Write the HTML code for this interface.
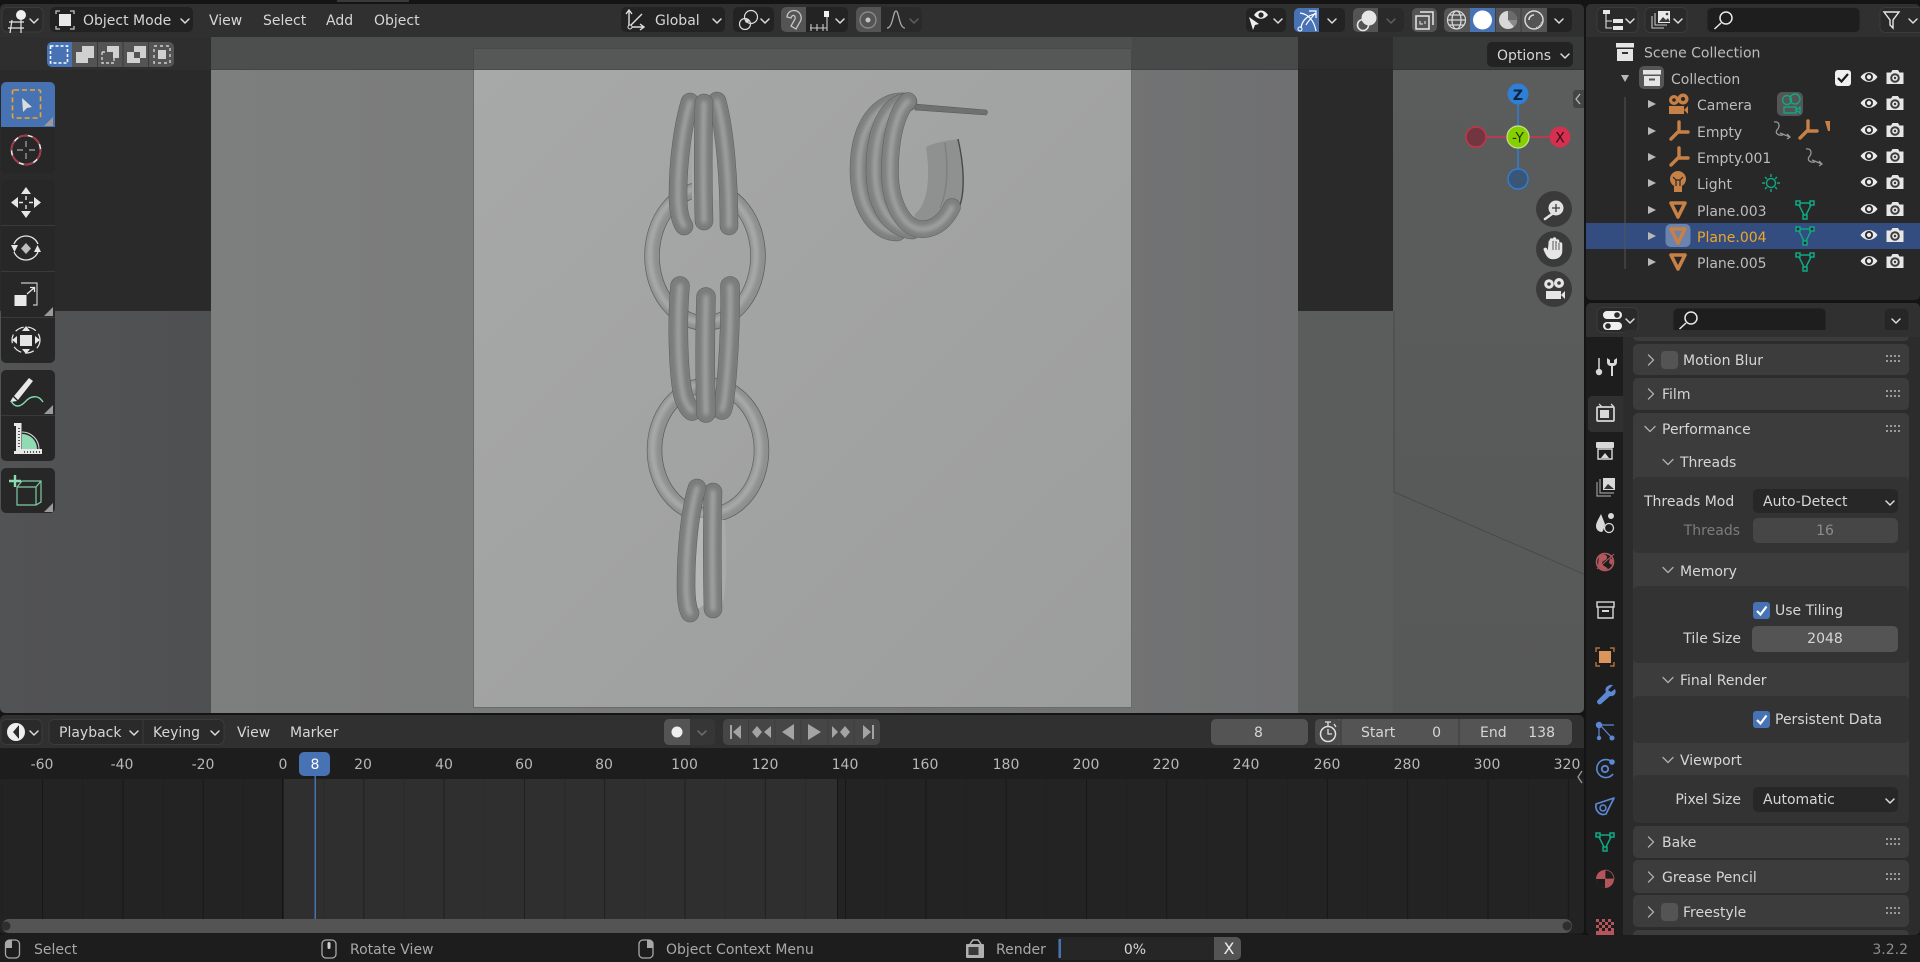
<!DOCTYPE html>
<html><head><meta charset="utf-8"><title>Blender</title>
<style>html,body{margin:0;padding:0;background:#111;width:1920px;height:962px;overflow:hidden}svg{display:block}text{font-family:"DejaVu Sans","Liberation Sans",sans-serif;font-size:14px;fill:#d6d6d6}.d{fill:#8a8a8a}.o{fill:#bcbcbc}.s{fill:#a8a8a8}.f{fill:#b8b8b8;font-size:14px;text-anchor:middle}.m{text-anchor:middle}.e{text-anchor:end}</style></head><body>
<svg width="1920" height="962" viewBox="0 0 1920 962" xmlns="http://www.w3.org/2000/svg">
<defs>
<clipPath id="vc"><rect x="0" y="4" width="1584" height="709" rx="5"/></clipPath>
<clipPath id="tc"><rect x="0" y="715" width="1584" height="220" rx="5"/></clipPath>
<clipPath id="oc"><rect x="1586" y="4" width="334" height="296" rx="5"/></clipPath>
<clipPath id="pc"><rect x="1586" y="303" width="334" height="632" rx="5"/></clipPath>
<linearGradient id="gp" x1="0" y1="0" x2="1" y2="1"><stop offset="0" stop-color="#a7a8a8"/><stop offset="1" stop-color="#9c9d9d"/></linearGradient>
<linearGradient id="gm" x1="0" y1="0" x2="1" y2="0"><stop offset="0" stop-color="#7d7e7e"/><stop offset=".5" stop-color="#787979"/><stop offset="1" stop-color="#6f7071"/></linearGradient>
<linearGradient id="gl" x1="0" y1="0" x2="1" y2="0"><stop offset="0" stop-color="#525355"/><stop offset="1" stop-color="#4f5051"/></linearGradient>
<linearGradient id="gr" x1="0" y1="0" x2="0" y2="1"><stop offset="0" stop-color="#5b5d5d"/><stop offset="1" stop-color="#575858"/></linearGradient>
<pattern id="g1" patternUnits="userSpaceOnUse" x="283" y="0" width="40.15" height="10"><rect x="0" width="1" height="10" fill="#000" fill-opacity=".1"/></pattern>
<pattern id="g2" patternUnits="userSpaceOnUse" x="283" y="0" width="80.3" height="10"><rect x="0" width="1" height="10" fill="#000" fill-opacity=".25"/></pattern>
<filter id="b1" filterUnits="userSpaceOnUse" x="0" y="0" width="1920" height="962"><feGaussianBlur stdDeviation="2"/></filter>
<filter id="b0" filterUnits="userSpaceOnUse" x="0" y="0" width="1920" height="962"><feGaussianBlur stdDeviation=".6"/></filter>
<path id="cd" d="M-4,-2 L0,2 L4,-2" fill="none" stroke="#dcdcdc" stroke-width="1.5" stroke-linecap="round" stroke-linejoin="round"/>
<path id="cdl" d="M-5,-2.5 L0,2.5 L5,-2.5" fill="none" stroke="#b0b0b0" stroke-width="1.3" stroke-linecap="round" stroke-linejoin="round"/>
<path id="crl" d="M-2.5,-5 L2.5,0 L-2.5,5" fill="none" stroke="#b0b0b0" stroke-width="1.3" stroke-linecap="round" stroke-linejoin="round"/>
<g id="eye"><path d="M-8.5,0 C-4,-6.5 4,-6.5 8.5,0 C4,6.5 -4,6.5 -8.5,0Z" fill="#eaeaea"/><circle r="4" fill="#2a2a2a"/><circle r="2.2" fill="#eaeaea"/></g>
<g id="cam"><path d="M-8.5,-4.5 H-4 L-2.5,-7 H3 L4.5,-4.5 H8.5 V7 H-8.5Z" fill="#e6e6e6"/><circle cy="1" r="4.8" fill="#3c3c3c"/><circle cy="1" r="2.8" fill="#e6e6e6"/><circle cy="1" r="1.2" fill="#3c3c3c"/></g>
<path id="tri" d="M-7,-7 L7,-7 L0,7Z" fill="none" stroke="#c78046" stroke-width="3.6" stroke-linejoin="round"/>
<g id="msh" fill="none" stroke="#10a884" stroke-width="1.5"><path d="M-7,-7 L7,-7 L0,7Z"/><rect x="-9" y="-9" width="4" height="4" fill="#282828"/><rect x="5" y="-9" width="4" height="4" fill="#282828"/><rect x="-2" y="5" width="4" height="4" fill="#282828"/></g>
<path id="emp" d="M1,-9 V0 M0,1 L-7,8 M1,1 H10" fill="none" stroke="#c78046" stroke-width="3.4" stroke-linecap="round"/>
<path id="lnk" d="M-8,-8 C-2,-9 -2,-3 -5,0 C-7,3 -4,6 1,5 M-2,3 L8,7 M5,4 L8,7 L5,9" fill="none" stroke="#969696" stroke-width="1.3"/>
<g id="grip" fill="#9a9a9a"><rect x="0" y="0" width="2" height="2"/><rect x="4" y="0" width="2" height="2"/><rect x="8" y="0" width="2" height="2"/><rect x="12" y="0" width="2" height="2"/><rect x="0" y="5" width="2" height="2"/><rect x="4" y="5" width="2" height="2"/><rect x="8" y="5" width="2" height="2"/><rect x="12" y="5" width="2" height="2"/></g>
<g id="ckb"><rect x="0" y="0" width="17" height="17" rx="3" fill="#4772b3"/><path d="M4,9 L7.5,12.5 L13.5,4.5" fill="none" stroke="#fff" stroke-width="2.2"/></g>
<path id="hnt" d="M-5,4 H4 V-5Z" fill="#9a9a9a"/>
<path id="t1a" d="M690,102 C683,125 678,160 678,195 C678,210 680,220 684,226"/>
<path id="t1b" d="M704,103 C703,140 703,185 704,221"/>
<path id="t1c" d="M717,101 C725,130 729,180 729,226"/>
<path id="t2a" d="M680,286 C677,320 678,370 683,395 C686,405 690,410 692,411"/>
<path id="t2b" d="M706,297 C705,330 705,380 706,413"/>
<path id="t2c" d="M730,286 C731,320 728,370 725,395 C724,405 723,408 722,410"/>
<path id="t3a" d="M697,488 C690,510 686,550 686,585 C686,600 688,610 690,613"/>
<path id="t3b" d="M713,492 C712,530 712,570 713,609"/>
<path id="e1" d="M905,102 C880,100 859,125 859,170 C859,205 875,232 897,232"/>
<path id="e2" d="M908,102 C888,103 875,130 875,170 C875,205 890,228 912,230"/>
<path id="e3" d="M908,101 C896,112 890,140 890,172 C890,205 905,232 925,229 C936,228 946,220 952,207"/>
</defs>

<rect width="1920" height="962" fill="#141414"/>
<rect x="337" y="0" width="72" height="2" fill="#3a3a3a"/>

<!-- viewport -->
<g clip-path="url(#vc)">
<rect x="0" y="4" width="1584" height="33" fill="#303030"/>
<rect x="0" y="37" width="211" height="33" fill="#2e2e2e"/>
<rect x="211" y="37" width="921" height="33" fill="#4d4f4f"/>
<rect x="473" y="48" width="659" height="22" fill="#565857"/>
<rect x="1132" y="37" width="166" height="33" fill="#484949"/>
<rect x="1298" y="37" width="95" height="33" fill="#2d2d2d"/>
<rect x="1393" y="37" width="191" height="33" fill="#383939"/>
<rect x="473" y="48" width="659" height="1" fill="#484a4a"/>
<rect x="473" y="48" width="1" height="22" fill="#484a4a"/>
<rect x="1131" y="48" width="1" height="22" fill="#484a4a"/>
<rect x="0" y="70" width="211" height="241" fill="#2a2a2a"/>
<rect x="0" y="311" width="211" height="402" fill="url(#gl)"/>
<rect x="211" y="70" width="1087" height="643" fill="url(#gm)"/>
<rect x="473" y="70" width="659" height="638" fill="url(#gp)"/>
<path d="M473.5,70 V707.5 H1131.5 V70" fill="none" stroke="#6a6b6b"/>
<rect x="1298" y="70" width="95" height="241" fill="#2a2a2a"/>
<rect x="1298" y="311" width="95" height="402" fill="#5b5c5c"/>
<rect x="1393" y="70" width="191" height="643" fill="url(#gr)"/>
<path d="M1394,311 V492 L1586,575" fill="none" stroke="#484a4a" stroke-width="1"/>
<rect x="211" y="69" width="1373" height="1" fill="#000" opacity=".12"/>

<!-- 3D objects -->
<g fill="none">
<ellipse cx="705" cy="256" rx="53" ry="67" stroke="#5c5d5d" stroke-width="15.5"/>
<ellipse cx="705" cy="256" rx="53" ry="67" stroke="#8e8f8f" stroke-width="14"/>
<ellipse cx="703" cy="255" rx="53" ry="67" stroke="#aeafaf" stroke-width="5" filter="url(#b1)"/>
<ellipse cx="708" cy="450" rx="53.5" ry="65" stroke="#5c5d5d" stroke-width="15.500"/>
<ellipse cx="708" cy="450" rx="53.5" ry="65" stroke="#8e8f8f" stroke-width="14"/>
<ellipse cx="706" cy="449" rx="53.5" ry="65" stroke="#aeafaf" stroke-width="5" filter="url(#b1)"/>
</g>
<path d="M692,132 L697,120 L716,120 L720,200 L692,200Z" fill="#a9aaaa"/>
<g fill="none" stroke-linecap="round">
<g stroke-width="18.500" stroke="#5a5b5b"><use href="#t1a"/><use href="#t1c"/></g>
<g stroke-width="17.5" stroke="#7b7c7c"><use href="#t1a"/><use href="#t1c"/></g>
<g stroke-width="5" stroke="#a4a5a5" filter="url(#b1)"><use href="#t1a"/><use href="#t1c"/></g>
<use href="#t1b" stroke-width="18.500" stroke="#5a5b5b"/><use href="#t1b" stroke-width="17.5" stroke="#7b7c7c"/><use href="#t1b" stroke-width="5" stroke="#a4a5a5" filter="url(#b1)"/>
<g stroke-width="19.500" stroke="#5a5b5b"><use href="#t2a"/><use href="#t2c"/></g>
<g stroke-width="18.5" stroke="#7b7c7c"><use href="#t2a"/><use href="#t2c"/></g>
<g stroke-width="5" stroke="#a4a5a5" filter="url(#b1)"><use href="#t2a"/><use href="#t2c"/></g>
<use href="#t2b" stroke-width="19.500" stroke="#5a5b5b"/><use href="#t2b" stroke-width="18.5" stroke="#7b7c7c"/><use href="#t2b" stroke-width="5" stroke="#a4a5a5" filter="url(#b1)"/>
</g>
<path d="M694,518 L712,518 L712,600 L696,610Z" fill="#b6b8b8"/>
<path d="M720,520 H725 C727,560 727,590 722,605Z" fill="#a9abab"/>
<g fill="none" stroke-linecap="round">
<use href="#t3b" stroke-width="18.500" stroke="#5a5b5b"/><use href="#t3b" stroke-width="17.5" stroke="#7b7c7c"/><use href="#t3b" stroke-width="5" stroke="#a6a7a7" filter="url(#b1)"/>
<use href="#t3a" stroke-width="18.500" stroke="#5a5b5b"/><use href="#t3a" stroke-width="17.5" stroke="#7b7c7c"/><use href="#t3a" stroke-width="5" stroke="#a6a7a7" filter="url(#b1)"/>
</g>
<!-- earring -->
<path d="M915,104 L986,110 Q989,112 986,115 L915,110Z" fill="#6f7070" stroke="#555656" stroke-width=".6"/>
<path d="M926,147 C933,143 945,141 958,139 C964,165 965,190 960,205 C952,228 930,240 912,232 L915,214 C927,205 931,180 926,147Z" fill="#8f9191"/>
<path d="M945,143 C948,165 948,190 940,208" fill="none" stroke="#7f8181" stroke-width="1.5"/>
<path d="M958,139 C964,165 965,190 960,205 C955,220 945,230 935,234" fill="none" stroke="#484949" stroke-width="1.4"/>
<g fill="none" stroke-linecap="round">
<use href="#e1" stroke-width="18.500" stroke="#5c5d5d"/><use href="#e1" stroke-width="17.5" stroke="#7e7f7f"/><use href="#e1" stroke-width="5" stroke="#a4a5a5" filter="url(#b1)"/>
<use href="#e2" stroke-width="18.500" stroke="#5c5d5d"/><use href="#e2" stroke-width="17.5" stroke="#7e7f7f"/><use href="#e2" stroke-width="5" stroke="#a4a5a5" filter="url(#b1)"/>
<use href="#e3" stroke-width="17.500" stroke="#5c5d5d"/><use href="#e3" stroke-width="16.5" stroke="#7e7f7f"/><use href="#e3" stroke-width="5" stroke="#a4a5a5" filter="url(#b1)"/>
</g>
<!-- toolbar panels -->
<g fill="#272727">
<rect x="1" y="82" width="54" height="91" rx="5"/>
<rect x="1" y="180" width="54" height="183" rx="5"/>
<rect x="1" y="370" width="54" height="91" rx="5"/>
<rect x="1" y="468" width="54" height="45" rx="5"/>
</g>
<path d="M1,127 V87 A5,5 0 0 1 6,82 H50 A5,5 0 0 1 55,87 V127Z" fill="#4772b3"/>
<path d="M1,225.5H55M1,271.5H55M1,317.5H55M1,415.5H55" stroke="#3a3a3a"/>
<!-- select tool -->
<rect x="12.5" y="90" width="28" height="28" rx="1.5" fill="none" stroke="#f0a528" stroke-width="1.6" stroke-dasharray="5 3"/>
<path d="M22,98 L32,107 L27,108 L23,112Z" fill="#dcdcdc"/>
<use href="#hnt" x="49" y="122"/>
<!-- cursor -->
<circle cx="26" cy="150" r="14.5" fill="none" stroke="#e8e8e8" stroke-width="1.6"/>
<circle cx="26" cy="150" r="14.5" fill="none" stroke="#b03040" stroke-width="1.6" stroke-dasharray="10 5"/>
<path d="M26,141V147M26,153V159M17,150H23M29,150H35" stroke="#a8a8a8" stroke-width="1.2"/>
<!-- move -->
<g fill="#e6e6e6"><path d="M26,187 L31,194 H21Z M26,218 L31,211 H21Z M11,202.5 L18,197 V208Z M41,202.5 L34,197 V208Z"/></g>
<path d="M26,196V200M26,205V209M19,202.5H23M29,202.5H33" stroke="#e6e6e6" stroke-width="1.4"/>
<!-- rotate -->
<path d="M14,244 A13,13 0 0 1 38,244 M38,252 A13,13 0 0 1 14,252" fill="none" stroke="#e6e6e6" stroke-width="1.3"/>
<path d="M26,243 L31,248.5 L26,254 L21,248.5Z" fill="#bdbdbd"/>
<path d="M11,245 L18,245 L14.5,252Z M34,252 L41,252 L37.5,245Z" fill="#e6e6e6"/>
<!-- scale -->
<path d="M21,283 H37 V305 H33" fill="none" stroke="#c8c8c8" stroke-width="1.2"/>
<rect x="14.500" y="295" width="12" height="11" fill="#e8e8e8"/>
<path d="M27,294 L34,288 M30,287.500 H34.500 V292" fill="none" stroke="#e8e8e8" stroke-width="1.3"/>
<use href="#hnt" x="49" y="312"/>
<!-- transform -->
<rect x="20" y="335" width="12" height="11" fill="#e6e6e6"/>
<ellipse cx="26" cy="340" rx="14" ry="13" fill="none" stroke="#e6e6e6" stroke-width="1.2" stroke-dasharray="9 4"/>
<path d="M26,326 L30,331 H22Z M26,354 L30,349 H22Z M12,340 L17,336 V344Z M40,340 L35,336 V344Z" fill="#e6e6e6"/>
<!-- annotate -->
<path d="M14,396 L29,378 L33,381 L18,400Z" fill="#e8e8e8"/>
<path d="M10,402 L13,397 L17,401Z" fill="#e8e8e8"/>
<path d="M11,401 C15,408 20,407 25,402 C30,396 38,394 43,402" fill="none" stroke="#7fdcb0" stroke-width="1.4"/>
<use href="#hnt" x="49" y="410"/>
<!-- measure -->
<path d="M22,434 A15,15 0 0 1 37,449 H22Z" fill="#8fdcb4"/>
<path d="M22,432 A17,17 0 0 1 39,449" fill="none" stroke="#dcdcdc" stroke-width="1"/>
<path d="M14,423 H21.500 V449 H42 V454 H14V451H16V426H14Z" fill="#e8e8e8"/>
<path d="M19,428V448M24,452H41" stroke="#555" stroke-width="2" stroke-dasharray="1 2" fill="none"/>
<!-- add cube -->
<path d="M15,475 V487 M9,481 H21" stroke="#8fdcb4" stroke-width="2.4"/>
<path d="M17,487 L22,481 H41 V502 L36,505 H17Z M17,487 H36 V505 M36,487 L41,481" fill="none" stroke="#7fcba5" stroke-width="1.2"/>
<use href="#hnt" x="49" y="508"/>

<!-- select modes -->
<rect x="47" y="42" width="127" height="25" rx="5" fill="#545454"/>
<path d="M47,47 A5,5 0 0 1 52,42 H72 V67 H52 A5,5 0 0 1 47,62Z" fill="#4772b3"/>
<path d="M97.5,42V67M123,42V67M148.5,42V67" stroke="#3a3a3a"/>
<rect x="50.5" y="46" width="17" height="17" fill="none" stroke="#fff" stroke-width="1.6" stroke-dasharray="3 2"/>
<path d="M82,46 H94 V58 H88 V63 H76 V52 H82Z" fill="#d0d0d0"/>
<path d="M107,46 H119 V58 H113 V52 H107Z" fill="#d0d0d0"/><path d="M102,52 H107M102,52V63 H114V58" fill="none" stroke="#d0d0d0" stroke-width="1.4" stroke-dasharray="3 2"/>
<path d="M134,46 H146 V58 H140 V52 H134Z M127,52 H134 V58 H140 V63 H127Z" fill="#d0d0d0"/>
<rect x="154" y="46" width="16" height="17" fill="none" stroke="#d0d0d0" stroke-width="1.4" stroke-dasharray="3 3"/><rect x="158" y="50" width="8" height="9" fill="#d0d0d0"/>

<!-- top header buttons -->
<rect x="2" y="7.5" width="41" height="24.5" rx="5" fill="#2a2a2a" stroke="#3b3b3b"/>
<circle cx="21" cy="15" r="5" fill="#f0f0f0"/>
<path d="M9,22H24M8,28H24M12,20L10,33M21,20V33" stroke="#e6e6e6" stroke-width="1.2" fill="none"/>
<use href="#cd" x="34" y="21"/>
<rect x="50" y="7" width="143" height="25" rx="5" fill="#222"/>
<path d="M56,14 V11 H60 M70,11 H74 V14 M56,26 V29 H60 M70,29 H74 V26" fill="none" stroke="#c4c4c4" stroke-width="1.3"/>
<rect x="59" y="14" width="12" height="12" fill="#e8e8e8"/>
<text x="83" y="25">Object Mode</text>
<use href="#cd" x="185" y="21"/>
<text x="209" y="25">View</text><text x="263" y="25">Select</text><text x="326" y="25">Add</text><text x="374" y="25">Object</text>

<rect x="621" y="7" width="104" height="25" rx="5" fill="#232323"/>
<path d="M629,11 V27 H643 M629,27 L642,14 M626,14 L629,10 L632,14 M640,24 L644,27 L640,30" fill="none" stroke="#e0e0e0" stroke-width="1.4"/>
<circle cx="630" cy="27" r="2" fill="#232323" stroke="#e0e0e0"/>
<text x="655" y="25">Global</text><use href="#cd" x="717" y="21"/>
<rect x="733" y="7" width="41" height="25" rx="5" fill="#232323"/>
<circle cx="745" cy="24" r="5.500" fill="none" stroke="#dcdcdc" stroke-width="1.200"/><circle cx="751" cy="17" r="6.500" fill="none" stroke="#dcdcdc" stroke-width="1.200"/><circle cx="747" cy="21" r="1.800" fill="#dcdcdc"/>
<use href="#cd" x="765" y="21"/>
<rect x="781" y="7" width="67" height="25" rx="5" fill="#232323"/>
<path d="M781,12 A5,5 0 0 1 786,7 H806 V32 H786 A5,5 0 0 1 781,27Z" fill="#545454"/>
<path d="M787,17 C788,7 803,9 801,20 L796,29 L791,26 L795,19 C796,15 792,14 791,18 Z" fill="none" stroke="#c4c4c4" stroke-width="1.3"/>
<path d="M810,28H827M811,24V31M817,24V31M823,24V31M827,17V31" stroke="#c8c8c8" stroke-width="1.1" fill="none"/>
<rect x="824" y="11" width="5" height="6" fill="#f0f0f0"/>
<use href="#cd" x="840" y="21"/>
<rect x="856" y="7" width="66" height="25" rx="5" fill="#2a2a2a"/>
<path d="M856,12 A5,5 0 0 1 861,7 H881 V32 H861 A5,5 0 0 1 856,27Z" fill="#545454"/>
<circle cx="868" cy="20" r="8" fill="none" stroke="#909090" stroke-width="1.2"/><circle cx="868" cy="20" r="2.5" fill="#c4c4c4"/>
<path d="M887,28 C893,28 893,11 896,11 C899,11 899,28 905,28" fill="none" stroke="#a8a8a8" stroke-width="1.3"/>
<use href="#cd" x="914" y="21" opacity=".3"/>

<rect x="1246" y="8" width="40" height="24" rx="5" fill="#232323"/>
<path d="M1254,15 C1258,9 1264,9 1268,15 C1264,20 1258,20 1254,15Z" fill="#eee"/><circle cx="1261" cy="15" r="2.6" fill="#232323"/>
<path d="M1249,17 L1259,24 L1255,25 L1253,30Z" fill="#eee"/>
<use href="#cd" x="1278" y="21"/>
<rect x="1294" y="8" width="51" height="24" rx="5" fill="#232323"/>
<path d="M1294,13 A5,5 0 0 1 1299,8 H1319 V32 H1299 A5,5 0 0 1 1294,27Z" fill="#4772b3"/>
<path d="M1301,28 C1302,20 1308,15 1316,14 M1306,25 C1308,21 1312,18 1315,13 M1309,11 H1316 V18 M1300,13 C1308,14 1314,20 1316,31" fill="none" stroke="#fff" stroke-width="1.2"/>
<circle cx="1300" cy="29" r="2" fill="none" stroke="#fff"/>
<use href="#cd" x="1332" y="21"/>
<rect x="1353" y="8" width="51" height="24" rx="5" fill="#2a2a2a"/>
<path d="M1353,13 A5,5 0 0 1 1358,8 H1378 V32 H1358 A5,5 0 0 1 1353,27Z" fill="#545454"/>
<circle cx="1369" cy="18" r="7.5" fill="#e6e6e6"/><circle cx="1363" cy="25" r="5.5" fill="none" stroke="#e6e6e6" stroke-width="1.6"/>
<use href="#cd" x="1391" y="21" opacity=".3"/>
<rect x="1412" y="8" width="25" height="24" rx="5" fill="#545454"/>
<path d="M1420,12 H1433 V25 M1416,16 H1429 V29 H1416Z" fill="none" stroke="#e6e6e6" stroke-width="1.5"/>
<path d="M1420,21V24H1423M1425,21V24" fill="none" stroke="#e6e6e6"/>
<rect x="1444" y="8" width="128" height="24" rx="5" fill="#232323"/>
<path d="M1444,13 A5,5 0 0 1 1449,8 H1547 V32 H1449 A5,5 0 0 1 1444,27Z" fill="#545454"/>
<rect x="1470" y="8" width="25" height="24" fill="#4772b3"/>
<path d="M1495.5,8V32M1521,8V32" stroke="#3e3e3e"/>
<g fill="none" stroke="#d8d8d8" stroke-width="1.2"><circle cx="1456.5" cy="20" r="9"/><ellipse cx="1456.5" cy="20" rx="4.5" ry="9"/><path d="M1447.5,20H1465.5M1449,15H1464M1449,25H1464"/></g>
<circle cx="1482.5" cy="20" r="9.5" fill="#fff"/>
<circle cx="1508" cy="20" r="9" fill="#d8d8d8"/><path d="M1508,11 V20 H1517 A9,9 0 0 0 1508,11Z" fill="#6a6a6a"/><path d="M1508,20 L1514,27 A9,9 0 0 0 1517,20Z" fill="#8a8a8a"/>
<circle cx="1534" cy="20" r="9" fill="none" stroke="#d8d8d8" stroke-width="1.5"/><path d="M1529,20 A5,5 0 0 1 1534,15" fill="none" stroke="#d8d8d8" stroke-width="1.6"/><path d="M1536,28 A8,8 0 0 0 1542,22" fill="none" stroke="#d8d8d8" stroke-width="2" stroke-dasharray="1 1"/>
<use href="#cd" x="1559" y="21"/>
<rect x="1487" y="42" width="86" height="25" rx="5" fill="#232323"/>
<text x="1497" y="60">Options</text><use href="#cd" x="1565" y="56"/>

<!-- nav gizmo -->
<path d="M1518,94V179" stroke="#2e7fd8" stroke-width="1.5"/><path d="M1476,137H1560" stroke="#d43050" stroke-width="1.5"/>
<circle cx="1518" cy="94" r="10.5" fill="#2e7fd8"/><text x="1518" y="100" class="m" style="fill:#10233c;font-size:14px;font-weight:bold">Z</text>
<circle cx="1518" cy="179" r="10" fill="#3a5575" stroke="#2e7fd8" stroke-width="1.4"/>
<circle cx="1476" cy="137" r="10" fill="#71363f" stroke="#d03048" stroke-width="1.4"/>
<circle cx="1560" cy="137" r="10.5" fill="#d43050"/><text x="1560" y="142.500" class="m" style="fill:#3c0c16;font-size:14px">X</text>
<circle cx="1518" cy="137" r="11" fill="#86d000" stroke="#c6e08c" stroke-width="1.2"/><text x="1518" y="142.500" class="m" style="fill:#223800;font-size:14px">-Y</text>
<circle cx="1554" cy="209" r="18" fill="#3a3a3a"/><circle cx="1554" cy="249" r="18" fill="#3a3a3a"/><circle cx="1554" cy="289" r="18" fill="#3a3a3a"/>
<circle cx="1556" cy="208" r="7.5" fill="#e2e2e2"/><path d="M1552,214 L1545,219" stroke="#e2e2e2" stroke-width="2.6" stroke-linecap="round"/><path d="M1556,204V212M1552,208H1560" stroke="#3a3a3a" stroke-width="1.3"/>
<path d="M1550,243 V240 a1.5,1.5 0 0 1 3,0 V247 M1553,240 V239 a1.5,1.5 0 0 1 3,0 V247 M1556,241 a1.5,1.5 0 0 1 3,0 V248 M1559,244 a1.5,1.5 0 0 1 3,0 V251 C1562,256 1558,259 1553,259 C1548,259 1546,255 1544,250 C1543,248 1546,247 1547,249 L1548,252 L1549,241 a1,1 0 0 1 1,0 Z" fill="#e6e6e6" stroke="#e6e6e6" stroke-width=".6"/>
<path d="M1553,241V250M1556,241V250M1559,243V250" stroke="#3a3a3a" stroke-width=".8"/>
<circle cx="1549" cy="284" r="4.8" fill="#e6e6e6"/><circle cx="1559" cy="283" r="5" fill="#e6e6e6"/><circle cx="1549" cy="284" r="1.8" fill="#3a3a3a"/><circle cx="1559" cy="283" r="1.8" fill="#3a3a3a"/>
<rect x="1546" y="291" width="15" height="8" fill="#e6e6e6"/><path d="M1561,295 L1565,291V299Z" fill="#e6e6e6"/>
<path d="M1584,90 H1576 A3,3 0 0 0 1573,93 V105 A3,3 0 0 0 1576,108 H1584Z" fill="#434444"/><path d="M1580,94 L1576,99 L1580,104" fill="none" stroke="#b8b8b8" stroke-width="1.3"/>
</g>

<!-- timeline -->
<g clip-path="url(#tc)">
<rect x="0" y="715" width="1584" height="33" fill="#303030"/>
<rect x="0" y="748" width="1584" height="31" fill="#1d1d1d"/>
<rect x="0" y="779" width="1584" height="156" fill="#232323"/>
<rect x="283" y="779" width="554" height="156" fill="#2f2f2f"/>
<rect x="0" y="779" width="1584" height="140" fill="url(#g1)"/>
<rect x="0" y="779" width="1584" height="140" fill="url(#g2)"/>
<rect x="282" y="779" width="1" height="156" fill="#151515"/><rect x="837" y="779" width="1" height="156" fill="#151515"/>
<rect x="314.500" y="776" width="1.500" height="159" fill="#4772b3"/>
<rect x="2" y="919" width="1570" height="14" rx="7" fill="#545454"/>
<circle cx="6" cy="926" r="4.500" fill="#2e2e2e"/><circle cx="1567" cy="926" r="4.500" fill="#2e2e2e"/>
<rect x="0" y="933" width="1584" height="2" fill="#1c1c1c"/>
<rect x="1" y="719.500" width="41" height="25" rx="5" fill="#2a2a2a" stroke="#3b3b3b"/>
<circle cx="16" cy="732" r="9" fill="#eee"/><path d="M19,725 L13,732 L19,739Z" fill="#2a2a2a"/>
<use href="#cd" x="34" y="733"/>
<rect x="49" y="719.500" width="175" height="25" rx="5" fill="#2a2a2a" stroke="#3b3b3b"/>
<path d="M143,720V745" stroke="#3b3b3b"/>
<text x="59" y="737">Playback</text><use href="#cd" x="134" y="733"/>
<text x="153" y="737">Keying</text><use href="#cd" x="215" y="733"/>
<text x="237" y="737">View</text><text x="290" y="737">Marker</text>
<rect x="664" y="719" width="51" height="26" rx="5" fill="#363636"/>
<path d="M664,724 A5,5 0 0 1 669,719 H690 V745 H669 A5,5 0 0 1 664,740Z" fill="#545454"/>
<circle cx="677" cy="732" r="5.500" fill="#eee"/><use href="#cd" x="702" y="733" opacity=".35"/>
<rect x="723" y="719" width="157" height="26" rx="5" fill="#464646"/>
<path d="M748.500,719V745M775,719V745M801,719V745M828,719V745M854,719V745" stroke="#3d3d3d"/>
<g fill="#a4a4a4">
<path d="M730,725H732V739H730Z M741,725V739L733,732Z"/>
<path d="M757,726L762,732L757,738L752,732Z M771,726V738L764,732Z"/>
<path d="M794,724V740L782,732Z"/>
<path d="M808,724V740L821,732Z"/>
<path d="M832,726V738L838,732Z M845,726L850,732L845,738L840,732Z"/>
<path d="M863,725V739L871,732Z M872,725H874V739H872Z"/>
</g>
<rect x="1211" y="719" width="97" height="26" rx="5" fill="#545454"/>
<text x="1258.500" y="737" class="m">8</text>
<rect x="1315" y="719" width="257" height="26" rx="5" fill="#545454"/>
<rect x="1315" y="719" width="26" height="26" rx="5" fill="#4a4a4a"/>
<path d="M1341,719V745M1459,719V745" stroke="#3d3d3d"/>
<circle cx="1328" cy="734" r="7.500" fill="none" stroke="#e0e0e0" stroke-width="1.500"/><path d="M1328,729V734H1332M1325,722H1331M1328,722V726M1334,724L1336,727" fill="none" stroke="#e0e0e0" stroke-width="1.300"/>
<text x="1361" y="737">Start</text><text x="1441" y="737" class="e">0</text>
<text x="1480" y="737">End</text><text x="1555" y="737" class="e">138</text>
<g class="tl">
<text class="f" y="769" x="42">-60</text><text class="f" y="769" x="122">-40</text><text class="f" y="769" x="203">-20</text><text class="f" y="769" x="283">0</text><text class="f" y="769" x="363">20</text><text class="f" y="769" x="444">40</text><text class="f" y="769" x="524">60</text><text class="f" y="769" x="604">80</text><text class="f" y="769" x="684.500">100</text><text class="f" y="769" x="765">120</text><text class="f" y="769" x="845">140</text><text class="f" y="769" x="925">160</text><text class="f" y="769" x="1006">180</text><text class="f" y="769" x="1086">200</text><text class="f" y="769" x="1166">220</text><text class="f" y="769" x="1246">240</text><text class="f" y="769" x="1327">260</text><text class="f" y="769" x="1407">280</text><text class="f" y="769" x="1487">300</text><text class="f" y="769" x="1567">320</text>
</g>
<rect x="299" y="752" width="31" height="24" rx="5" fill="#4772b3"/>
<text x="315" y="769" class="m" style="fill:#fff">8</text>
<path d="M1582,771 L1578,777 L1582,783" fill="none" stroke="#9a9a9a" stroke-width="1.300"/>
</g>

<!-- outliner -->
<g clip-path="url(#oc)">
<rect x="1586" y="4" width="334" height="296" fill="#282828"/>
<rect x="1586" y="4" width="334" height="33" fill="#303030"/>
<rect x="1597" y="7.500" width="41" height="25" rx="5" fill="#2a2a2a" stroke="#3b3b3b"/>
<g fill="#e8e8e8"><rect x="1603" y="10" width="7" height="4"/><rect x="1613" y="19" width="10" height="4"/><rect x="1613" y="26" width="10" height="4"/></g>
<path d="M1606,14V28H1612M1606,21H1612" fill="none" stroke="#e0e0e0" stroke-width="1.100"/>
<use href="#cd" x="1630" y="21"/>
<rect x="1645" y="7.500" width="42" height="25" rx="5" fill="#2a2a2a" stroke="#3b3b3b"/>
<path d="M1652,16V28H1664 M1655,13V25H1667" fill="none" stroke="#c8c8c8" stroke-width="1.100"/>
<rect x="1658" y="11" width="12" height="12" fill="#e8e8e8"/><path d="M1659,22L1663,17L1666,20L1668,18L1670,22Z" fill="#3a3a3a"/><circle cx="1667" cy="14" r="1.300" fill="#3a3a3a"/>
<use href="#cd" x="1678" y="21"/>
<rect x="1707" y="7.500" width="153" height="25" rx="5" fill="#1e1e1e" stroke="#2e2e2e"/>
<circle cx="1726" cy="18" r="6" fill="none" stroke="#e8e8e8" stroke-width="1.500"/><path d="M1721,23L1714.500,29" stroke="#e8e8e8" stroke-width="1.500"/>
<rect x="1880" y="7.500" width="50" height="25" rx="5" fill="#2a2a2a" stroke="#3b3b3b"/>
<path d="M1884,12H1899L1893,20V28L1890,25V20Z" fill="none" stroke="#e8e8e8" stroke-width="1.400"/>
<use href="#cd" x="1913" y="21"/>
<rect x="1586" y="223" width="334" height="26" fill="#334d80"/>
<path d="M1625,97V269" stroke="#555" stroke-width="1"/>
<!-- collection icons -->
<rect x="1616" y="43" width="18" height="4.500" fill="#e4e4e4"/><path d="M1617,49H1633V61H1617Z" fill="#e4e4e4"/><rect x="1622" y="52" width="6" height="2" fill="#333"/>
<rect x="1639" y="66" width="25" height="23" rx="5" fill="#555"/>
<rect x="1643" y="70" width="18" height="4.500" fill="#e4e4e4"/><path d="M1644,76H1660V86H1644Z" fill="#e4e4e4"/><rect x="1649" y="78.500" width="6" height="2" fill="#555"/>
<path d="M1621,75H1629L1625,82Z" fill="#b8b8b8"/>
<g fill="#b8b8b8"><path d="M1648,100V108L1656,104Z"/><path d="M1648,127V135L1656,131Z"/><path d="M1648,153V161L1656,157Z"/><path d="M1648,179V187L1656,183Z"/><path d="M1648,206V214L1656,210Z"/><path d="M1648,232V240L1656,236Z"/><path d="M1648,258V266L1656,262Z"/></g>
<g fill="#c78046"><circle cx="1674" cy="100" r="5"/><circle cx="1683" cy="99" r="5.500"/><rect x="1669" y="106" width="15" height="8"/><path d="M1684,110L1688,106V114Z"/></g>
<circle cx="1674" cy="100" r="1.800" fill="#282828"/><circle cx="1683" cy="99" r="2" fill="#282828"/>
<rect x="1777" y="92" width="26" height="24" rx="5" fill="#555"/>
<g fill="none" stroke="#10a884" stroke-width="1.400"><circle cx="1787" cy="100" r="4.500"/><circle cx="1795" cy="99" r="5"/><rect x="1784" y="107" width="12" height="6"/><path d="M1796,110L1800,107V113Z"/></g>
<use href="#emp" x="1678" y="131"/><use href="#emp" x="1678" y="157"/>
<use href="#lnk" x="1782" y="130"/><use href="#lnk" x="1814" y="157"/>
<use href="#emp" x="1807" y="130"/>
<path d="M1825,121H1830V131H1828Z" fill="#c78046"/>
<circle cx="1678" cy="179" r="8" fill="#c78046"/><rect x="1674" y="186" width="8" height="6" fill="#c78046"/><path d="M1673,177L1676,180H1680L1683,177M1676,180V186M1680,180V186" stroke="#282828" stroke-width="1.200" fill="none"/>
<g fill="none" stroke="#10a884" stroke-width="1.400"><circle cx="1771" cy="183" r="4.500"/><path d="M1771,174V177M1771,189V192M1762,183H1765M1777,183H1780M1765,177L1767,179M1775,187L1777,189M1765,189L1767,187M1775,179L1777,177"/></g>
<use href="#tri" x="1678" y="210"/>
<rect x="1665.500" y="224" width="25" height="23" rx="5" fill="#6b83ad"/>
<use href="#tri" x="1678" y="236"/>
<use href="#tri" x="1678" y="262"/>
<use href="#msh" x="1805" y="210"/><use href="#msh" x="1805" y="236"/><use href="#msh" x="1805" y="262"/>
<text class="o" x="1644" y="57.500">Scene Collection</text>
<text class="o" x="1671" y="84">Collection</text>
<text class="o" x="1697" y="110">Camera</text>
<text class="o" x="1697" y="137">Empty</text>
<text class="o" x="1697" y="163">Empty.001</text>
<text class="o" x="1697" y="189">Light</text>
<text class="o" x="1697" y="216">Plane.003</text>
<text x="1697" y="242" style="fill:#f0a526">Plane.004</text>
<text class="o" x="1697" y="268">Plane.005</text>
<rect x="1835" y="70" width="16" height="16" rx="3" fill="#f0f0f0"/><path d="M1838,78L1841.500,81.500L1848,74" fill="none" stroke="#1a1a1a" stroke-width="2.200"/>
<use href="#eye" x="1869" y="77"/><use href="#cam" x="1895" y="77"/>
<use href="#eye" x="1869" y="103"/><use href="#cam" x="1895" y="103"/>
<use href="#eye" x="1869" y="130"/><use href="#cam" x="1895" y="130"/>
<use href="#eye" x="1869" y="156"/><use href="#cam" x="1895" y="156"/>
<use href="#eye" x="1869" y="182"/><use href="#cam" x="1895" y="182"/>
<use href="#eye" x="1869" y="209"/><use href="#cam" x="1895" y="209"/>
<use href="#eye" x="1869" y="235"/><use href="#cam" x="1895" y="235"/>
<use href="#eye" x="1869" y="261"/><use href="#cam" x="1895" y="261"/>
</g>

<!-- properties -->
<g clip-path="url(#pc)">
<rect x="1586" y="303" width="334" height="632" fill="#2c2c2c"/>
<rect x="1586" y="303" width="334" height="34" fill="#303030"/>
<rect x="1597" y="307.500" width="41" height="25" rx="5" fill="#2a2a2a" stroke="#3b3b3b"/>
<rect x="1603" y="311" width="19" height="8" rx="4" fill="#eee"/><rect x="1603" y="322" width="19" height="8" rx="4" fill="#eee"/><circle cx="1617" cy="315" r="2.800" fill="#2a2a2a"/><circle cx="1608" cy="326" r="2.800" fill="#2a2a2a"/>
<use href="#cd" x="1630" y="321"/>
<rect x="1673" y="308" width="153" height="25" rx="5" fill="#1e1e1e" stroke="#2e2e2e"/>
<circle cx="1691" cy="318" r="6" fill="none" stroke="#e8e8e8" stroke-width="1.500"/><path d="M1686,323L1679.500,329" stroke="#e8e8e8" stroke-width="1.500"/>
<rect x="1884" y="308" width="25" height="25" rx="5" fill="#262626" stroke="#333"/>
<use href="#cd" x="1896" y="321"/>
<rect x="1586" y="337" width="37" height="598" fill="#1d1d1d"/>
<path d="M1623,396 H1592 A4,4 0 0 0 1588,400 V428 A4,4 0 0 0 1592,432 H1623Z" fill="#303030"/>
<rect x="1633" y="330" width="276" height="11" rx="5" fill="#3c3c3c"/><rect x="1625" y="330" width="295" height="7" fill="#303030"/>
<rect x="1633" y="344" width="276" height="31" rx="5" fill="#3c3c3c"/>
<rect x="1633" y="378" width="276" height="32" rx="5" fill="#3c3c3c"/>
<rect x="1633" y="413" width="276" height="410" rx="5" fill="#3c3c3c"/>
<rect x="1633" y="477" width="276" height="76" rx="5" fill="#333"/>
<rect x="1633" y="586" width="276" height="77" rx="5" fill="#333"/>
<rect x="1633" y="696" width="276" height="47" rx="5" fill="#333"/>
<rect x="1633" y="775" width="276" height="48" rx="5" fill="#333"/>
<rect x="1633" y="826" width="276" height="32" rx="5" fill="#3c3c3c"/>
<rect x="1633" y="860" width="276" height="33" rx="5" fill="#3c3c3c"/>
<rect x="1633" y="895" width="276" height="32" rx="5" fill="#3c3c3c"/>
<rect x="1633" y="930" width="276" height="10" rx="5" fill="#3c3c3c"/>
<use href="#crl" x="1651" y="360"/><use href="#crl" x="1651" y="394"/>
<use href="#cdl" x="1650" y="429"/><use href="#cdl" x="1668" y="462"/><use href="#cdl" x="1668" y="570"/><use href="#cdl" x="1668" y="680"/><use href="#cdl" x="1668" y="760"/>
<use href="#crl" x="1651" y="842"/><use href="#crl" x="1651" y="877"/><use href="#crl" x="1651" y="912"/>
<use href="#grip" x="1886" y="355"/><use href="#grip" x="1886" y="390"/><use href="#grip" x="1886" y="425"/><use href="#grip" x="1886" y="838"/><use href="#grip" x="1886" y="873"/><use href="#grip" x="1886" y="907"/>
<rect x="1661" y="351" width="17" height="18" rx="4" fill="#545454"/>
<rect x="1661" y="903" width="17" height="18" rx="4" fill="#545454"/>
<text x="1683" y="365">Motion Blur</text>
<text x="1662" y="399">Film</text>
<text x="1662" y="434">Performance</text>
<text x="1680" y="467">Threads</text>
<text x="1644" y="506">Threads Mod</text>
<rect x="1753" y="489" width="145" height="24" rx="5" fill="#272727"/>
<text x="1763" y="506">Auto-Detect</text><use href="#cd" x="1890" y="503"/>
<text x="1740" y="535" class="e" style="fill:#7c7c7c">Threads</text>
<rect x="1753" y="518" width="145" height="25" rx="5" fill="#464646"/>
<text x="1825" y="535" class="m" style="fill:#8c8c8c">16</text>
<text x="1680" y="576">Memory</text>
<use href="#ckb" x="1753" y="602"/>
<text x="1775" y="615">Use Tiling</text>
<text x="1741" y="643" class="e">Tile Size</text>
<rect x="1752" y="626" width="146" height="26" rx="5" fill="#545454"/>
<text x="1825" y="643" class="m">2048</text>
<text x="1680" y="685">Final Render</text>
<use href="#ckb" x="1753" y="711"/>
<text x="1775" y="724">Persistent Data</text>
<text x="1680" y="765">Viewport</text>
<text x="1741" y="804" class="e">Pixel Size</text>
<rect x="1753" y="787" width="145" height="25" rx="5" fill="#272727"/>
<text x="1763" y="804">Automatic</text><use href="#cd" x="1890" y="801"/>
<text x="1662" y="847">Bake</text>
<text x="1662" y="882">Grease Pencil</text>
<text x="1683" y="917">Freestyle</text>
<!-- tab icons -->
<path d="M1599,358V369" stroke="#d8d8d8" stroke-width="1.500"/><circle cx="1599" cy="372" r="3.200" fill="#d8d8d8"/>
<path d="M1607,358V362C1607,365 1609,366 1611,366V376H1613V366C1615,366 1617,365 1617,362V358L1614,360V363H1610V360Z" fill="#d8d8d8"/>
<rect x="1597" y="407" width="17" height="14" rx="1" fill="none" stroke="#d8d8d8" stroke-width="1.700"/><rect x="1600" y="410" width="9" height="8" fill="#d8d8d8"/><path d="M1611,404L1614,407M1599,404L1602,407" stroke="#d8d8d8" stroke-width="1.300"/>
<rect x="1596" y="442" width="18" height="6" rx="1" fill="#d8d8d8"/><path d="M1598,449H1612V459H1598Z" fill="none" stroke="#d8d8d8" stroke-width="1.400"/><path d="M1601,458L1605,453L1609,458Z" fill="#d8d8d8"/>
<path d="M1597,482V496H1611 M1600,479V493H1614" fill="none" stroke="#9a9a9a" stroke-width="1.200"/><rect x="1603" y="478" width="12" height="12" fill="#d8d8d8"/><path d="M1604,489L1608,484L1614,489Z" fill="#333"/>
<path d="M1601,514C1598,520 1596,523 1596,526C1596,530 1599,532 1602,532C1604,530 1604,527 1605,524Z" fill="#d8d8d8"/><circle cx="1611" cy="516" r="3" fill="#d8d8d8"/><circle cx="1609" cy="528" r="4.500" fill="none" stroke="#d8d8d8" stroke-width="1.300"/>
<circle cx="1605" cy="562" r="8.500" fill="none" stroke="#b0585e" stroke-width="1.600"/><path d="M1599,556C1603,553 1608,555 1607,558C1606,561 1603,560 1602,563C1602,566 1606,566 1608,569C1605,571 1600,570 1598,565Z M1610,558L1613,560L1612,565L1609,563Z" fill="#b0585e"/><path d="M1597,569L1614,554" stroke="#b0585e" stroke-width="1"/>
<rect x="1597" y="602" width="17" height="5" fill="none" stroke="#d8d8d8" stroke-width="1.400"/><path d="M1598,607V618H1613V607" fill="none" stroke="#d8d8d8" stroke-width="1.400"/><rect x="1602" y="610" width="7" height="2" fill="#d8d8d8"/>
<path d="M1596,652V648H1600M1610,648H1614V652M1596,662V666H1600M1610,666H1614V662" fill="none" stroke="#c78046" stroke-width="1.200"/><rect x="1599" y="651" width="12" height="12" fill="#d9955c"/>
<path d="M1613,685C1608,684 1604,688 1606,692L1597,701C1597,704 1599,705 1601,704L1610,696C1614,697 1617,693 1615,689L1611,692L1608,690Z" fill="#5d88d6"/>
<g fill="#5d88d6"><circle cx="1599" cy="725" r="3.200"/><circle cx="1599" cy="738" r="2.200"/><circle cx="1612" cy="738" r="2.500"/></g><path d="M1599,727V737M1601,726L1611,737M1602,725H1614" stroke="#5d88d6" stroke-width="1.200" fill="none"/>
<path d="M1612,762A9,9 0 1 0 1613,774" fill="none" stroke="#5d88d6" stroke-width="1.600"/><circle cx="1605" cy="769" r="3.200" fill="none" stroke="#5d88d6" stroke-width="1.800"/><circle cx="1612" cy="762" r="2.800" fill="#5d88d6"/>
<path d="M1614,798L1596,804C1595,811 1600,816 1606,814Z" fill="none" stroke="#5d88d6" stroke-width="1.700" stroke-linejoin="round"/><circle cx="1603" cy="808" r="3" fill="none" stroke="#5d88d6" stroke-width="1.500"/>
<use href="#msh" x="1605" y="842"/>
<circle cx="1605" cy="879" r="9" fill="#b4555c"/><path d="M1605,879 V870 A9,9 0 0 1 1614,879Z" fill="#1d1d1d" stroke="#b4555c" stroke-width=".8"/><path d="M1605,879 V888 A9,9 0 0 1 1596,879Z" fill="#1d1d1d"/>
<rect x="1596" y="919" width="18" height="16" fill="#b4555c"/><g fill="#1d1d1d"><rect x="1599" y="919" width="3" height="3"/><rect x="1605" y="919" width="3" height="3"/><rect x="1611" y="919" width="3" height="3"/><rect x="1596" y="922" width="3" height="3"/><rect x="1602" y="922" width="3" height="3"/><rect x="1608" y="922" width="3" height="3"/><rect x="1599" y="925" width="3" height="3"/><rect x="1605" y="925" width="3" height="3"/><rect x="1611" y="925" width="3" height="3"/><rect x="1596" y="928" width="3" height="3"/><rect x="1602" y="928" width="3" height="3"/><rect x="1608" y="928" width="3" height="3"/></g>
</g>

<!-- status bar -->
<rect x="0" y="935" width="1920" height="27" fill="#1d1d1d"/>
<rect x="5.500" y="940" width="14" height="18" rx="4" fill="none" stroke="#a8a8a8" stroke-width="1.300"/><path d="M6,944 A4,4 0 0 1 10,940 H12 V948 H6Z" fill="#a8a8a8"/>
<text class="s" x="34" y="954">Select</text>
<rect x="322" y="940" width="14" height="18" rx="4" fill="none" stroke="#a8a8a8" stroke-width="1.300"/><rect x="327.500" y="942" width="3" height="7" rx="1.500" fill="#d0d0d0"/>
<text class="s" x="350" y="954">Rotate View</text>
<rect x="639" y="940" width="14" height="18" rx="4" fill="none" stroke="#a8a8a8" stroke-width="1.300"/><path d="M647,940 H649 A4,4 0 0 1 653,944 V948 H647Z" fill="#a8a8a8"/>
<text class="s" x="666" y="954">Object Context Menu</text>
<rect x="966" y="944" width="18" height="14" rx="1" fill="#b0b0b0"/><rect x="968.500" y="947" width="10" height="8" fill="#3a3a3a"/><path d="M970,944L973,940H978L981,944" fill="none" stroke="#b0b0b0" stroke-width="1.500"/>
<text class="s" x="996" y="954">Render</text>
<rect x="1058" y="937" width="183" height="23" rx="5" fill="#545454"/>
<path d="M1063,937 H1214 V960 H1063 A5,5 0 0 1 1058,955 V942 A5,5 0 0 1 1063,937Z" fill="#262626"/>
<rect x="1058.500" y="939" width="2.500" height="19" fill="#4772b3"/>
<text x="1135" y="954" class="m">0%</text>
<text x="1229" y="954" class="m" style="fill:#eee;font-size:16px">X</text>
<text x="1908" y="954" class="e" style="fill:#8c8c8c">3.2.2</text>
</svg>
</body></html>
